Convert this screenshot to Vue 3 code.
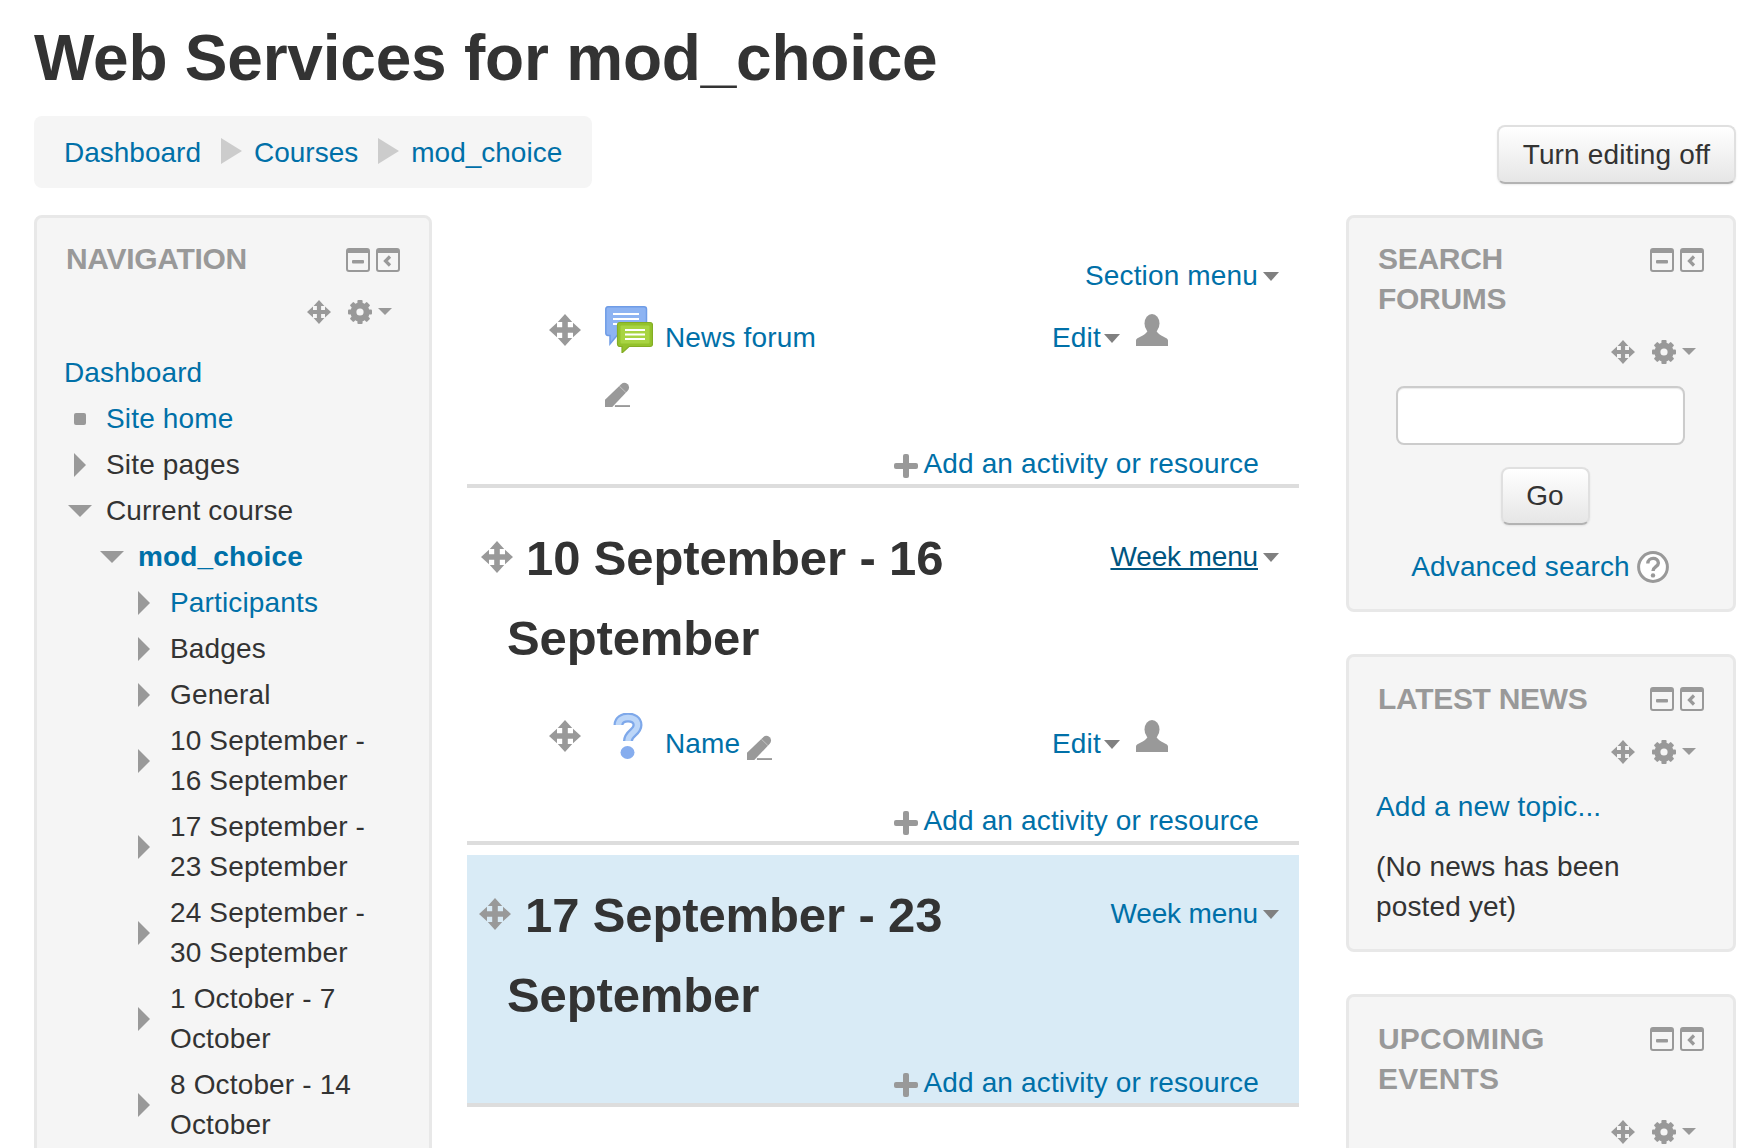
<template>
  <div class="page">
    <!-- icon sprites -->
    <svg class="sprites" aria-hidden="true">
      <symbol id="move" viewBox="0 0 16 16">
        <path d="M8 0L11.6 4H9.4V6.6H12V4.4L16 8L12 11.6V9.4H9.4V12H11.6L8 16L4.4 12H6.6V9.4H4V11.6L0 8L4 4.4V6.6H6.6V4H4.4Z" />
      </symbol>
      <symbol id="gear" viewBox="0 0 24 24">
        <circle cx="12" cy="12" r="6.6" fill="none" stroke="currentColor" stroke-width="6" />
        <rect v-for="a in [0, 45, 90, 135, 180, 225, 270, 315]" :key="a" x="9.4" y="0" width="5.2" height="6" rx="1" :transform="`rotate(${a} 12 12)`" />
      </symbol>
      <symbol id="minbox" viewBox="0 0 24 24">
        <rect x="1" y="1" width="22" height="22" rx="2" fill="none" stroke="currentColor" stroke-width="2" />
        <rect x="1" y="1" width="22" height="4" />
        <rect x="6" y="12" width="12" height="3.4" rx="1" />
      </symbol>
      <symbol id="colbox" viewBox="0 0 24 24">
        <rect x="1" y="1" width="22" height="22" rx="2" fill="none" stroke="currentColor" stroke-width="2" />
        <rect x="1" y="1" width="22" height="4" />
        <path d="M14 8.5L9.5 13L14 17.5" fill="none" stroke="currentColor" stroke-width="3.2" />
      </symbol>
      <symbol id="user" viewBox="0 0 32 32">
        <ellipse cx="16" cy="9.5" rx="7.5" ry="9.5" />
        <path d="M0 32V26.5C0 23 9 22.5 11.5 17H20.5C23 22.5 32 23 32 26.5V32Z" />
      </symbol>
      <symbol id="pencil" viewBox="0 0 24 24">
        <path d="M0 24V17L15.5 2.2Q18.5 -0.6 21.8 2.2Q24.4 5.2 21.8 8.4L7 24Z" />
        <rect x="9.5" y="22.2" width="14.5" height="1.8" />
        <path d="M13.8 4L20 10" stroke="#fff" stroke-width="0.8" opacity="0.5" />
      </symbol>
      <symbol id="plus" viewBox="0 0 24 24">
        <rect x="9" y="0" width="6" height="24" rx="2" />
        <rect x="0" y="9" width="24" height="6" rx="2" />
      </symbol>
      <symbol id="help" viewBox="0 0 32 32">
        <circle cx="16" cy="16" r="14.4" fill="#fff" stroke="currentColor" stroke-width="3" />
        <path d="M10.8 12.4C10.8 5.8 21.4 5.8 21.4 12C21.4 15.6 16 15.8 16 20" fill="none" stroke="currentColor" stroke-width="3.4" />
        <circle cx="16" cy="24.4" r="2.2" />
      </symbol>
    </svg>

    <h1 class="title">Web Services for mod_choice</h1>

    <div class="topbar">
      <nav class="crumbs">
        <template v-for="(c, i) in crumbs" :key="c">
          <i v-if="i" class="crumb-sep"></i>
          <a>{{ c }}</a>
        </template>
      </nav>
      <button class="btn edit-btn">Turn editing off</button>
    </div>

    <div class="columns">
      <!-- left -->
      <aside class="block left">
        <div class="block-head">
          <h2>NAVIGATION</h2>
          <div class="ctrls">
            <svg class="ic i24"><use href="#minbox" /></svg>
            <svg class="ic i24"><use href="#colbox" /></svg>
          </div>
        </div>
        <div class="actions">
          <svg class="ic i24"><use href="#move" /></svg>
          <svg class="ic i24 gear"><use href="#gear" /></svg>
          <i class="caret small"></i>
        </div>
        <ul class="tree">
          <li v-for="n in navItems" :key="n.text" :class="'lv' + n.level">
            <span v-if="n.level" class="slot"><i :class="n.icon"></i></span>
            <a v-if="n.link" :class="{ strong: n.bold }">{{ n.text }}</a>
            <span v-else>{{ n.text }}</span>
          </li>
        </ul>
      </aside>

      <!-- center -->
      <main class="course">
        <section class="sec first">
          <div class="menu-line"><a>Section menu</a><i class="caret"></i></div>
          <div class="activity">
            <svg class="ic a-move"><use href="#move" /></svg>
            <svg class="forum" viewBox="0 0 48 47">
              <path d="M3 0.8H39A2.5 2.5 0 0 1 41.5 3.3V27A2.5 2.5 0 0 1 39 29.5H12L5 38V29.5H3A2.5 2.5 0 0 1 0.8 27V3.3A2.5 2.5 0 0 1 3 0.8Z" fill="#8db3f2" stroke="#6f9ce6" stroke-width="1.5" />
              <rect x="8" y="7" width="26" height="2" fill="#fff" />
              <rect x="8" y="12" width="26" height="2" fill="#fff" />
              <rect x="8" y="17" width="26" height="2" fill="#fff" />
              <path d="M15 16.5H45A2.5 2.5 0 0 1 47.5 19V38A2.5 2.5 0 0 1 45 40.5H24L17 47V40.5H15A2.5 2.5 0 0 1 12.5 38V19A2.5 2.5 0 0 1 15 16.5Z" fill="#94c22c" stroke="#84ad24" stroke-width="1.2" />
              <rect x="15.5" y="19.5" width="29" height="18" rx="1" fill="#a8d442" />
              <rect x="20" y="23" width="20" height="2" fill="#fff" />
              <rect x="20" y="27.5" width="20" height="2" fill="#fff" />
              <rect x="20" y="32" width="20" height="2" fill="#fff" />
            </svg>
            <a class="a-name">News forum</a>
            <div class="a-edit">
              <a>Edit</a><i class="caret"></i>
              <svg class="ic a-user"><use href="#user" /></svg>
            </div>
            <svg class="ic a-pencil"><use href="#pencil" /></svg>
          </div>
          <div class="add"><svg class="ic a-plus"><use href="#plus" /></svg><a>Add an activity or resource</a></div>
        </section>

        <section class="sec">
          <div class="menu-float hover"><a>Week menu</a><i class="caret"></i></div>
          <h3><svg class="ic h-move"><use href="#move" /></svg>10 September - 16 September</h3>
          <div class="activity">
            <svg class="ic a-move"><use href="#move" /></svg>
            <svg class="qmark" viewBox="0 0 32 46">
              <path d="M6.5 12C6.5 2 25.5 2 25.5 12C25.5 19.5 16 20 16 28" fill="none" stroke="#7ea8ea" stroke-width="10" />
              <path d="M6.5 12C6.5 2 25.5 2 25.5 12C25.5 19.5 16 20 16 28" fill="none" stroke="#bcd6f8" stroke-width="5.5" />
              <ellipse cx="15.5" cy="39.5" rx="7" ry="6.5" fill="#86adee" />
            </svg>
            <div class="a-name">
              <a>Name</a>
              <svg class="ic n-pencil"><use href="#pencil" /></svg>
            </div>
            <div class="a-edit">
              <a>Edit</a><i class="caret"></i>
              <svg class="ic a-user"><use href="#user" /></svg>
            </div>
          </div>
          <div class="add"><svg class="ic a-plus"><use href="#plus" /></svg><a>Add an activity or resource</a></div>
        </section>

        <section class="sec current">
          <div class="menu-float"><a>Week menu</a><i class="caret"></i></div>
          <h3><svg class="ic h-move"><use href="#move" /></svg>17 September - 23 September</h3>
          <div class="add tight"><svg class="ic a-plus"><use href="#plus" /></svg><a>Add an activity or resource</a></div>
        </section>
      </main>

      <!-- right -->
      <aside class="right">
        <div class="block search">
          <div class="block-head">
            <h2>SEARCH<br />FORUMS</h2>
            <div class="ctrls">
              <svg class="ic i24"><use href="#minbox" /></svg>
              <svg class="ic i24"><use href="#colbox" /></svg>
            </div>
          </div>
          <div class="actions">
            <svg class="ic i24"><use href="#move" /></svg>
            <svg class="ic i24 gear"><use href="#gear" /></svg>
            <i class="caret small"></i>
          </div>
          <input class="search-input" type="text" />
          <button class="btn go-btn">Go</button>
          <div class="adv"><a>Advanced search</a><svg class="ic help"><use href="#help" /></svg></div>
        </div>

        <div class="block news">
          <div class="block-head">
            <h2>LATEST NEWS</h2>
            <div class="ctrls">
              <svg class="ic i24"><use href="#minbox" /></svg>
              <svg class="ic i24"><use href="#colbox" /></svg>
            </div>
          </div>
          <div class="actions">
            <svg class="ic i24"><use href="#move" /></svg>
            <svg class="ic i24 gear"><use href="#gear" /></svg>
            <i class="caret small"></i>
          </div>
          <a class="news-add">Add a new topic...</a>
          <p class="news-empty">(No news has been posted yet)</p>
        </div>

        <div class="block events">
          <div class="block-head">
            <h2>UPCOMING<br />EVENTS</h2>
            <div class="ctrls">
              <svg class="ic i24"><use href="#minbox" /></svg>
              <svg class="ic i24"><use href="#colbox" /></svg>
            </div>
          </div>
          <div class="actions">
            <svg class="ic i24"><use href="#move" /></svg>
            <svg class="ic i24 gear"><use href="#gear" /></svg>
            <i class="caret small"></i>
          </div>
        </div>
      </aside>
    </div>
  </div>
</template>

<script setup>
const crumbs = ["Dashboard", "Courses", "mod_choice"];

const navItems = [
  { text: "Dashboard", level: 0, link: true },
  { text: "Site home", level: 1, icon: "dot", link: true },
  { text: "Site pages", level: 1, icon: "tri-r" },
  { text: "Current course", level: 1, icon: "tri-d" },
  { text: "mod_choice", level: 2, icon: "tri-d", link: true, bold: true },
  { text: "Participants", level: 3, icon: "tri-r", link: true },
  { text: "Badges", level: 3, icon: "tri-r" },
  { text: "General", level: 3, icon: "tri-r" },
  { text: "10 September - 16 September", level: 3, icon: "tri-r" },
  { text: "17 September - 23 September", level: 3, icon: "tri-r" },
  { text: "24 September - 30 September", level: 3, icon: "tri-r" },
  { text: "1 October - 7 October", level: 3, icon: "tri-r" },
  { text: "8 October - 14 October", level: 3, icon: "tri-r" },
];
</script>

<style>
html,
body {
  margin: 0;
  background: #fff;
  overflow: hidden;
}
</style>

<style scoped>
.page {
  height: 1148px;
  overflow: hidden;
  padding: 18px 22px 0 34px;
  box-sizing: border-box;
  font-family: "Liberation Sans", Arial, sans-serif;
  font-size: 28px;
  line-height: 40px;
  letter-spacing: 0.15px;
  color: #333;
}

.sprites {
  position: absolute;
  width: 0;
  height: 0;
}

a {
  color: #0070a8;
}

.ic {
  display: block;
  fill: currentColor;
  color: #999;
  flex: none;
}

.i24 {
  width: 24px;
  height: 24px;
}

.title {
  margin: 0;
  font-size: 64px;
  line-height: 80px;
  font-weight: 700;
  letter-spacing: -0.22px;
}

.topbar {
  display: flex;
  justify-content: space-between;
  align-items: center;
  margin-top: 18px;
}

.crumbs {
  display: flex;
  align-items: center;
  height: 72px;
  padding: 2px 30px 0;
  box-sizing: border-box;
  background: #f5f5f5;
  border-radius: 8px;
  letter-spacing: 0;
}

.crumb-sep {
  width: 0;
  height: 0;
  margin: -5px 12px 0 20px;
  border-left: 21px solid #ccc;
  border-top: 13px solid transparent;
  border-bottom: 13px solid transparent;
}

.btn {
  font: inherit;
  letter-spacing: inherit;
  color: #333;
  height: 59px;
  padding: 0 22px;
  background: linear-gradient(#fff, #e6e6e6);
  border: 2px solid #e0e0e0;
  border-bottom-color: #b3b3b3;
  border-radius: 8px;
  box-shadow: 0 1px 2px rgba(0, 0, 0, 0.08);
}

.edit-btn {
  width: 239px;
  margin-top: 5px;
}

.columns {
  display: flex;
  align-items: flex-start;
  margin-top: 27px;
}

.left {
  flex: none;
  width: 398px;
}

.course {
  flex: 1;
  min-width: 0;
  margin: 0 47px 0 35px;
}

/* blocks */
.block {
  background: #f5f5f5;
  border: 3px solid #e8e8e8;
  border-radius: 8px;
  padding: 21px 29px 22px 27px;
  box-sizing: border-box;
}

.block-head {
  display: flex;
  justify-content: space-between;
  align-items: flex-start;
}

h2 {
  margin: 0 0 0 2px;
  font-size: 30px;
  line-height: 40px;
  font-weight: 700;
  color: #999;
  letter-spacing: -0.3px;
}

.news h2,
.events h2 {
  margin-top: 1px;
}

.events h2 {
  letter-spacing: 0.2px;
}

.ctrls {
  display: flex;
  gap: 6px;
  margin-top: 9px;
}

.actions {
  display: flex;
  justify-content: flex-end;
  align-items: flex-start;
  margin: 21px 8px 0 0;
}

.gear {
  margin-left: 17px;
}

.caret {
  display: inline-block;
  width: 0;
  height: 0;
  margin-left: 5px;
  border-top: 9px solid #808080;
  border-left: 8px solid transparent;
  border-right: 8px solid transparent;
}

.caret.small {
  margin: 8px 0 0 6px;
  border-top: 7px solid #999;
  border-left-width: 7px;
  border-right-width: 7px;
}

/* nav tree */
.tree {
  list-style: none;
  margin: 29px 0 0;
  padding: 0;
}

.tree li {
  display: flex;
  align-items: center;
  margin-bottom: 6px;
}

.tree .lv2 {
  margin-left: 32px;
}

.tree .lv3 {
  margin-left: 64px;
}

.slot {
  flex: none;
  width: 42px;
  display: flex;
  align-items: center;
}

.strong {
  font-weight: 700;
}

.tri-r {
  margin-left: 10px;
  width: 0;
  height: 0;
  border-left: 12px solid #999;
  border-top: 12px solid transparent;
  border-bottom: 12px solid transparent;
}

.tri-d {
  margin-left: 4px;
  width: 0;
  height: 0;
  border-top: 12px solid #999;
  border-left: 12px solid transparent;
  border-right: 12px solid transparent;
}

.dot {
  margin-left: 10px;
  width: 12px;
  height: 12px;
  border-radius: 2px;
  background: #999;
}

/* sections */
.sec {
  margin-top: 10px;
  padding-top: 20px;
  border-bottom: 4px solid #ddd;
}

.sec.first {
  margin-top: 0;
  padding-top: 41px;
}

.sec.current {
  background: #d9ebf6;
}

.menu-line,
.menu-float {
  display: flex;
  align-items: center;
  justify-content: flex-end;
  padding-right: 20px;
}

.menu-float {
  float: right;
  margin-top: 19px;
  letter-spacing: -0.15px;
}

.menu-float.hover a {
  color: #005580;
  text-decoration: underline;
}

h3 {
  margin: 0 0 0 40px;
  font-size: 49px;
  line-height: 80px;
  font-weight: 700;
  letter-spacing: -0.12px;
}

.h-move {
  display: inline-block;
  width: 32px;
  height: 32px;
  margin: 0 13px 0 -26px;
  vertical-align: 2px;
}

.current .h-move {
  margin-left: -28px;
  margin-right: 14px;
}

.activity {
  display: grid;
  grid-template-columns: 56px 60px 387px auto;
  grid-template-rows: 52px;
  align-items: start;
  padding-left: 82px;
  margin-top: 10px;
}

.sec:not(.first) .activity {
  margin-top: 34px;
}

.a-move {
  width: 32px;
  height: 32px;
  margin-top: 8px;
}

.forum {
  display: block;
  width: 48px;
  height: 47px;
}

.qmark {
  display: block;
  width: 32px;
  height: 46px;
  margin: 1px 0 0 7px;
}

.a-name {
  display: flex;
  align-items: flex-start;
  margin-top: 12px;
}

.n-pencil {
  width: 25px;
  height: 25px;
  margin: 11px 0 0 7px;
}

.a-edit {
  display: flex;
  align-items: flex-start;
}

.a-edit a {
  margin-top: 12px;
}

.a-edit .caret {
  margin: 28px 0 0 3px;
}

.a-user {
  width: 32px;
  height: 32px;
  margin: 8px 0 0 16px;
}

.a-pencil {
  grid-row: 2;
  grid-column: 2;
  width: 25px;
  height: 25px;
  margin-top: 24px;
}

.add {
  display: flex;
  justify-content: flex-end;
  align-items: center;
  padding-right: 40px;
  margin-top: 37px;
  clear: both;
}

.add.tight {
  margin-top: 28px;
}

.a-plus {
  width: 24px;
  height: 24px;
  margin: 4px 5px 0 0;
}

/* right column */
.right {
  flex: none;
  display: flex;
  flex-direction: column;
  gap: 42px;
  width: 390px;
}

.search {
  display: flex;
  flex-direction: column;
}

.search .block-head,
.search .actions {
  align-self: stretch;
}

.search-input {
  display: block;
  align-self: center;
  width: 289px;
  height: 59px;
  margin-top: 22px;
  margin-left: 1px;
  box-sizing: border-box;
  background: #fff;
  border: 2px solid #ccc;
  border-radius: 8px;
  box-shadow: inset 0 1px 1px rgba(0, 0, 0, 0.08);
}

.go-btn {
  align-self: center;
  width: 89px;
  height: 58px;
  padding: 0;
  margin: 22px 0 0 10px;
}

.adv {
  display: flex;
  align-items: center;
  justify-content: center;
  margin-top: 22px;
}

.help {
  width: 32px;
  height: 32px;
  margin-left: 7px;
}

.news-add {
  display: block;
  margin-top: 23px;
}

.news-empty {
  margin: 20px 0 0;
  padding-right: 60px;
}
</style>
